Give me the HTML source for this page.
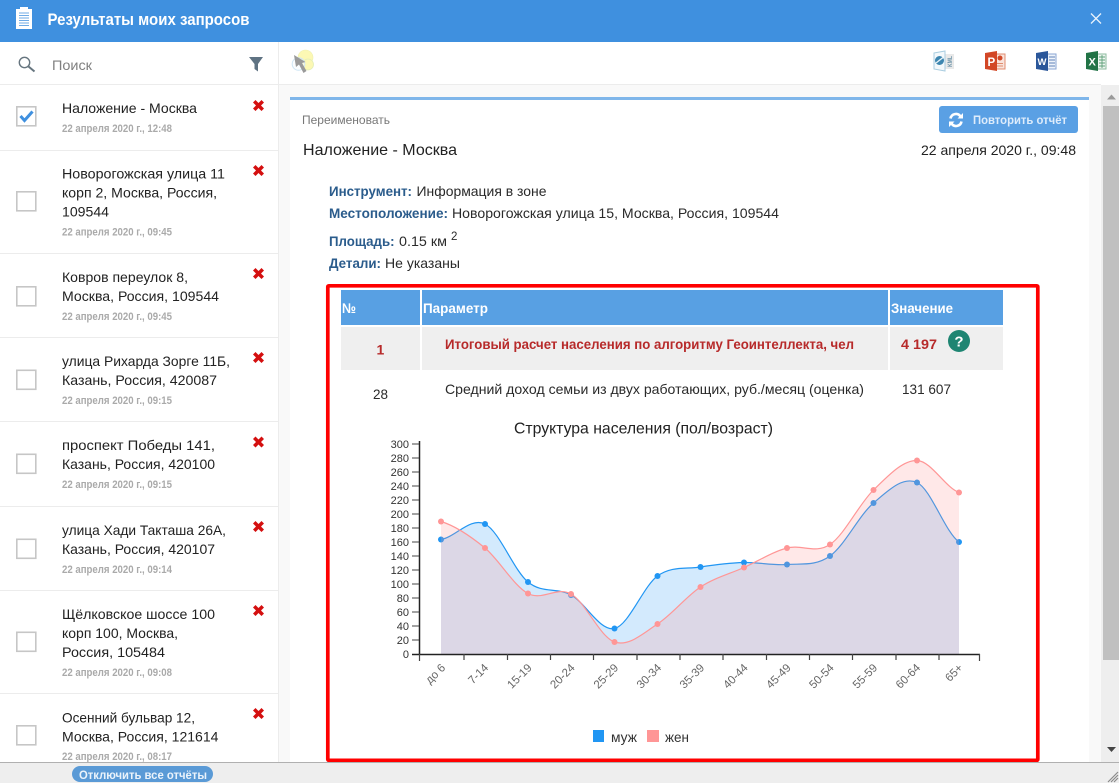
<!DOCTYPE html>
<html lang="ru">
<head>
<meta charset="utf-8">
<title>Результаты моих запросов</title>
<style>
html,body{margin:0;padding:0;width:1119px;height:783px;overflow:hidden;background:#fff}
svg{display:block;font-family:"Liberation Sans","Noto Sans CJK SC",sans-serif}
.n{font-size:14px;fill:#222}
.d{font-size:11px;fill:#aaa;font-weight:bold}
.m{font-size:14px;fill:#2b5c8c;font-weight:bold}
.v{font-size:14px;fill:#2a2a2a}
.h{font-size:14px;fill:#fff;font-weight:bold}
.r{font-size:14px;fill:#b72a2a;font-weight:bold}
.y{font-size:11px;fill:#333;text-anchor:end}
.x{font-size:11.5px;fill:#666;text-anchor:end}
.ic{filter:blur(.35px)}
</style>
</head>
<body>
<svg width="1119" height="783" viewBox="0 0 1119 783" xmlns="http://www.w3.org/2000/svg">
<defs>
<path id="del" d="M-5.5,-3 L-3,-5.5 L0,-2.500 L3,-5.500 L5.500,-3 L2.500,0 L5.500,3 L3,5.500 L0,2.500 L-3,5.500 L-5.500,3 L-2.500,0 Z" fill="#d40f0f"/>
</defs>

<!-- backgrounds -->
<rect width="1119" height="783" fill="#fff"/>
<rect x="279" y="85" width="840" height="678" fill="#f9f9f9"/>
<rect x="290" y="97" width="799" height="666" fill="#fff"/>
<rect x="290" y="97" width="799" height="3" fill="#7fb6ea"/>
<rect x="1101" y="85" width="18" height="678" fill="#eee"/>
<rect x="1103" y="106" width="16" height="554" fill="#c0c0c0"/>
<path d="M1107,99.500 L1116,99.500 L1111.500,94.500 Z" fill="#999"/>
<path d="M1107,747 L1116,747 L1111.500,752 Z" fill="#444"/>
<rect x="278" y="42" width="1" height="721" fill="#ececec"/>
<rect x="0" y="84" width="1101" height="1" fill="#ececec"/>

<!-- header -->
<rect width="1119" height="42" fill="#3f90df"/>
<path d="M16,9 H20 V7 H28 V9 H32 V29 H16 Z" fill="#fff"/>
<path d="M19,13 H29 M19,15.500 H29 M19,18 H29 M19,20.500 H29 M19,23 H29 M19,25.500 H29" stroke="#6fabe6" stroke-width="1"/>
<text x="47.500" y="25" font-size="17" font-weight="bold" fill="#fff" textLength="202" lengthAdjust="spacingAndGlyphs">Результаты моих запросов</text>
<path d="M1091,13.500 L1101,23.500 M1101,13.500 L1091,23.500" stroke="#e8f2fc" stroke-width="1.300" fill="none"/>

<!-- search row -->
<circle cx="24.500" cy="62.500" r="5.200" fill="none" stroke="#66757f" stroke-width="1.400"/>
<path d="M28.500,66.500 L34.500,71.500" stroke="#66757f" stroke-width="2"/>
<text x="52" y="70" font-size="14" fill="#808080" textLength="40" lengthAdjust="spacingAndGlyphs">Поиск</text>
<path d="M249,57 H263 L258,64 V71.500 L254.500,69 V64 Z" fill="#5f7383"/>

<!-- list separators -->
<g fill="#ececec">
<rect x="0" y="150" width="278" height="1"/>
<rect x="0" y="253" width="278" height="1"/>
<rect x="0" y="337" width="278" height="1"/>
<rect x="0" y="421" width="278" height="1"/>
<rect x="0" y="506" width="278" height="1"/>
<rect x="0" y="590" width="278" height="1"/>
<rect x="0" y="693" width="278" height="1"/>
</g>

<!-- checkboxes -->
<g fill="#fff" stroke="#c6c6c6" stroke-width="1.600">
<rect x="16.800" y="106.800" width="19" height="19"/>
<rect x="16.800" y="191.800" width="19" height="19"/>
<rect x="16.800" y="286.800" width="19" height="19"/>
<rect x="16.800" y="370.300" width="19" height="19"/>
<rect x="16.800" y="454.300" width="19" height="19"/>
<rect x="16.800" y="539.300" width="19" height="19"/>
<rect x="16.800" y="632.300" width="19" height="19"/>
<rect x="16.800" y="725.800" width="19" height="19"/>
</g>
<path d="M20.500,116 L24.500,120.500 L32.500,111.500" fill="none" stroke="#3f90df" stroke-width="3"/>

<!-- delete -->
<use href="#del" x="258.500" y="105.500"/>
<use href="#del" x="258.500" y="170.500"/>
<use href="#del" x="258.500" y="273.500"/>
<use href="#del" x="258.500" y="357.500"/>
<use href="#del" x="258.500" y="442"/>
<use href="#del" x="258.500" y="526.500"/>
<use href="#del" x="258.500" y="610.500"/>
<use href="#del" x="258.500" y="713.500"/>

<!-- list text -->
<text class="n" x="62" y="113" textLength="135" lengthAdjust="spacingAndGlyphs">Наложение - Москва</text>
<text class="d" x="62" y="132" textLength="110" lengthAdjust="spacingAndGlyphs">22 апреля 2020 г., 12:48</text>

<text class="n" x="62" y="178.500" textLength="163" lengthAdjust="spacingAndGlyphs">Новорогожская улица 11</text>
<text class="n" x="62" y="197.500" textLength="155" lengthAdjust="spacingAndGlyphs">корп 2, Москва, Россия,</text>
<text class="n" x="62" y="216.500" textLength="47" lengthAdjust="spacingAndGlyphs">109544</text>
<text class="d" x="62" y="235.500" textLength="110" lengthAdjust="spacingAndGlyphs">22 апреля 2020 г., 09:45</text>

<text class="n" x="62" y="282" textLength="126" lengthAdjust="spacingAndGlyphs">Ковров переулок 8,</text>
<text class="n" x="62" y="301" textLength="157" lengthAdjust="spacingAndGlyphs">Москва, Россия, 109544</text>
<text class="d" x="62" y="320" textLength="110" lengthAdjust="spacingAndGlyphs">22 апреля 2020 г., 09:45</text>

<text class="n" x="62" y="366" textLength="168" lengthAdjust="spacingAndGlyphs">улица Рихарда Зорге 11Б,</text>
<text class="n" x="62" y="385" textLength="155" lengthAdjust="spacingAndGlyphs">Казань, Россия, 420087</text>
<text class="d" x="62" y="404" textLength="110" lengthAdjust="spacingAndGlyphs">22 апреля 2020 г., 09:15</text>

<text class="n" x="62" y="450" textLength="153" lengthAdjust="spacingAndGlyphs">проспект Победы 141,</text>
<text class="n" x="62" y="469" textLength="153" lengthAdjust="spacingAndGlyphs">Казань, Россия, 420100</text>
<text class="d" x="62" y="488" textLength="110" lengthAdjust="spacingAndGlyphs">22 апреля 2020 г., 09:15</text>

<text class="n" x="62" y="535" textLength="164" lengthAdjust="spacingAndGlyphs">улица Хади Такташа 26А,</text>
<text class="n" x="62" y="554" textLength="153" lengthAdjust="spacingAndGlyphs">Казань, Россия, 420107</text>
<text class="d" x="62" y="573" textLength="110" lengthAdjust="spacingAndGlyphs">22 апреля 2020 г., 09:14</text>

<text class="n" x="62" y="619" textLength="153" lengthAdjust="spacingAndGlyphs">Щёлковское шоссе 100</text>
<text class="n" x="62" y="638" textLength="116" lengthAdjust="spacingAndGlyphs">корп 100, Москва,</text>
<text class="n" x="62" y="657" textLength="103" lengthAdjust="spacingAndGlyphs">Россия, 105484</text>
<text class="d" x="62" y="676" textLength="110" lengthAdjust="spacingAndGlyphs">22 апреля 2020 г., 09:08</text>

<text class="n" x="62" y="722.500" textLength="133" lengthAdjust="spacingAndGlyphs">Осенний бульвар 12,</text>
<text class="n" x="62" y="741.500" textLength="156.500" lengthAdjust="spacingAndGlyphs">Москва, Россия, 121614</text>
<text class="d" x="62" y="760" textLength="110" lengthAdjust="spacingAndGlyphs">22 апреля 2020 г., 08:17</text>

<!-- toolbar icons -->
<g class="ic">
<circle cx="305.500" cy="57.500" r="7.500" fill="#fcf8b4" stroke="#eef0b0" stroke-width=".6"/>
<circle cx="308" cy="64.500" r="5.500" fill="#fcf8b4" stroke="#e3eeb8" stroke-width=".8"/>
<circle cx="298.500" cy="64" r="6.300" fill="#f6fbff" fill-opacity=".55" stroke="#cfe6f5" stroke-width="1"/>
<path d="M294,55 L296,67 L299,64.500 L303.500,73 L306.500,71 L302,63 L305.500,62 Z" fill="#9a9a9a"/>
</g>

<!-- KML -->
<g class="ic">
<rect x="945" y="54" width="9" height="15" fill="#e9e9e9"/>
<path d="M934,53 L945,51 V71 L934,69 Z" fill="#f3f8fb" stroke="#a9cde0" stroke-width="1"/>
<circle cx="939.500" cy="60.500" r="4.500" fill="#3d86b0"/>
<path d="M936,63 L943,57.500" stroke="#e8f3f8" stroke-width="1.400"/>
<text x="0" y="0" transform="translate(952,67) rotate(-90)" font-size="6.500" font-weight="bold" fill="#6c93a8" textLength="11" lengthAdjust="spacingAndGlyphs">KML</text>
</g>

<!-- PPT -->
<g class="ic">
<rect x="994" y="54" width="11" height="15" fill="#f9e4dc" stroke="#e08d70" stroke-width="1"/>
<path d="M985,53 L997,51 V71 L985,69 Z" fill="#d24726"/>
<text x="987.500" y="66" font-size="11.500" font-weight="bold" fill="#fff">P</text>
<circle cx="1000" cy="58" r="2.500" fill="#d24726"/>
<path d="M997,63.500 H1003 M997,66 H1003" stroke="#e08d70" stroke-width="1"/>
</g>

<!-- Word -->
<g class="ic">
<rect x="1045" y="54" width="11" height="15" fill="#eef3fa" stroke="#8aa6d3" stroke-width="1"/>
<path d="M1036,53 L1048,51 V71 L1036,69 Z" fill="#2b579a"/>
<text x="1037.500" y="65" font-size="9.500" font-weight="bold" fill="#fff">W</text>
<path d="M1049,57 H1055 M1049,60 H1055 M1049,63 H1055 M1049,66 H1055" stroke="#5f80b8" stroke-width="1"/>
</g>

<!-- Excel -->
<g class="ic">
<rect x="1095" y="54" width="11" height="15" fill="#eef6f0" stroke="#8dbb9f" stroke-width="1"/>
<path d="M1086,53 L1098,51 V71 L1086,69 Z" fill="#217346"/>
<text x="1088.500" y="65.500" font-size="11" font-weight="bold" fill="#fff">X</text>
<path d="M1099,57 H1105 M1099,60 H1105 M1099,63 H1105 M1099,66 H1105 M1102,55 V68" stroke="#5fa07a" stroke-width=".9"/>
</g>

<!-- card head -->
<text x="302" y="124" font-size="12" fill="#777" textLength="88" lengthAdjust="spacingAndGlyphs">Переименовать</text>
<rect x="939" y="106" width="139" height="27" rx="3" fill="#5aa0e4"/>
<g fill="none" stroke="#fff" stroke-width="2.600">
<path d="M950.500,118.500 A5.500,5.500 0 0 1 960.500,116.500"/>
<path d="M961.500,121.500 A5.500,5.500 0 0 1 951.500,123.500"/>
</g>
<path d="M963,113 V118.500 H957.500 Z M949,127 V121.500 H954.500 Z" fill="#fff"/>
<text x="973" y="124" font-size="12" font-weight="bold" fill="#deecfb" textLength="94" lengthAdjust="spacingAndGlyphs">Повторить отчёт</text>
<text x="303" y="155" font-size="16" fill="#222" textLength="154" lengthAdjust="spacingAndGlyphs">Наложение - Москва</text>
<text x="921" y="155" font-size="14" fill="#222" textLength="155" lengthAdjust="spacingAndGlyphs">22 апреля 2020 г., 09:48</text>

<!-- meta -->
<text class="m" x="329" y="196" textLength="83" lengthAdjust="spacingAndGlyphs">Инструмент:</text>
<text class="v" x="416.500" y="196" textLength="130" lengthAdjust="spacingAndGlyphs">Информация в зоне</text>
<text class="m" x="329" y="218" textLength="119" lengthAdjust="spacingAndGlyphs">Местоположение:</text>
<text class="v" x="452" y="218" textLength="327" lengthAdjust="spacingAndGlyphs">Новорогожская улица 15, Москва, Россия, 109544</text>
<text class="m" x="329" y="246" textLength="65.500" lengthAdjust="spacingAndGlyphs">Площадь:</text>
<text class="v" x="399" y="246" textLength="48" lengthAdjust="spacingAndGlyphs">0.15 км</text>
<text x="451" y="240" font-size="11.500" fill="#2a2a2a">2</text>
<text class="m" x="329" y="268" textLength="52" lengthAdjust="spacingAndGlyphs">Детали:</text>
<text class="v" x="385" y="268" textLength="75" lengthAdjust="spacingAndGlyphs">Не указаны</text>

<!-- table -->
<rect x="341" y="290" width="79" height="35" fill="#58a0e3"/>
<rect x="422" y="290" width="466" height="35" fill="#58a0e3"/>
<rect x="890" y="290" width="113" height="35" fill="#58a0e3"/>
<rect x="341" y="327" width="79" height="43" fill="#efefef"/>
<rect x="422" y="327" width="466" height="43" fill="#efefef"/>
<rect x="890" y="327" width="113" height="43" fill="#efefef"/>
<text class="h" x="342" y="313" textLength="14" lengthAdjust="spacingAndGlyphs">№</text>
<text class="h" x="423" y="313" textLength="65" lengthAdjust="spacingAndGlyphs">Параметр</text>
<text class="h" x="891" y="313" textLength="62" lengthAdjust="spacingAndGlyphs">Значение</text>
<text class="r" x="376.500" y="354.500">1</text>
<text class="r" x="445" y="349" textLength="409" lengthAdjust="spacingAndGlyphs">Итоговый расчет населения по алгоритму Геоинтеллекта, чел</text>
<text class="r" x="901" y="349" textLength="36" lengthAdjust="spacingAndGlyphs">4 197</text>
<circle cx="959" cy="341" r="11" fill="#1e8572"/>
<text x="959" y="346.500" font-size="15" font-weight="bold" fill="#fff" text-anchor="middle">?</text>
<text class="v" x="373" y="399" textLength="15" lengthAdjust="spacingAndGlyphs">28</text>
<text class="v" x="445" y="394" textLength="419" lengthAdjust="spacingAndGlyphs">Средний доход семьи из двух работающих, руб./месяц (оценка)</text>
<text class="v" x="902" y="394" textLength="49" lengthAdjust="spacingAndGlyphs">131 607</text>

<!-- chart -->
<text x="514" y="433.500" font-size="16" fill="#222" textLength="259" lengthAdjust="spacingAndGlyphs">Структура населения (пол/возраст)</text>

<!-- blue series -->
<path d="M441,539.500 C455.700,536.900 470.300,516.900 485,524 C499.300,531.100 513.700,570.200 528,582 C542.300,593.800 556.700,587.200 571,595 C585.500,602.800 600,631.700 614.500,628.500 C628.800,625.300 643.200,586.300 657.500,576 C671.800,565.700 686.200,569.300 700.500,567 C715,564.700 729.500,562.900 744,562.500 C758.300,562.100 772.700,565.600 787,564.500 C801.300,563.400 815.700,566.300 830,556 C844.500,545.800 859,515.300 873.500,503 C888,490.800 902.500,476 917,482.500 C931,489 945,532 959,542 V654 H441 Z" fill="#2196f3" fill-opacity=".2"/>
<path d="M441,539.500 C455.700,536.900 470.300,516.900 485,524 C499.300,531.100 513.700,570.200 528,582 C542.300,593.800 556.700,587.200 571,595 C585.500,602.800 600,631.700 614.500,628.500 C628.800,625.300 643.200,586.300 657.500,576 C671.800,565.700 686.200,569.300 700.500,567 C715,564.700 729.500,562.900 744,562.500 C758.300,562.100 772.700,565.600 787,564.500 C801.300,563.400 815.700,566.300 830,556 C844.500,545.800 859,515.300 873.500,503 C888,490.800 902.500,476 917,482.500 C931,489 945,532 959,542" fill="none" stroke="#2196f3" stroke-width="1.200"/>
<g fill="#2196f3">
<circle cx="441" cy="539.500" r="3"/><circle cx="485" cy="524" r="3"/><circle cx="528" cy="582" r="3"/><circle cx="571" cy="595" r="3"/><circle cx="614.500" cy="628.500" r="3"/><circle cx="657.500" cy="576" r="3"/><circle cx="700.500" cy="567" r="3"/><circle cx="744" cy="562.500" r="3"/><circle cx="787" cy="564.500" r="3"/><circle cx="830" cy="556" r="3"/><circle cx="873.500" cy="503" r="3"/><circle cx="917" cy="482.500" r="3"/><circle cx="959" cy="542" r="3"/>
</g>

<!-- pink series -->
<path d="M441,521.500 C455.700,525.900 470.300,536 485,548 C499.300,560 513.700,585.800 528,593.500 C542.300,601.200 556.700,585.900 571,594 C585.500,602.100 600,637 614.500,642 C628.800,647 643.200,633.200 657.500,624 C671.800,614.800 686.200,596.400 700.500,587 C715,577.600 729.500,574 744,567.500 C758.300,561 772.700,551.800 787,548 C801.300,544.200 815.700,554.200 830,544.500 C844.500,534.800 859,504 873.500,490 C888,476 902.500,460.100 917,460.500 C931,460.900 945,487.200 959,492.500 V654 H441 Z" fill="#ff9696" fill-opacity=".22"/>
<path d="M441,521.500 C455.700,525.900 470.300,536 485,548 C499.300,560 513.700,585.800 528,593.500 C542.300,601.200 556.700,585.900 571,594 C585.500,602.100 600,637 614.500,642 C628.800,647 643.200,633.200 657.500,624 C671.800,614.800 686.200,596.400 700.500,587 C715,577.600 729.500,574 744,567.500 C758.300,561 772.700,551.800 787,548 C801.300,544.200 815.700,554.200 830,544.500 C844.500,534.800 859,504 873.500,490 C888,476 902.500,460.100 917,460.500 C931,460.900 945,487.200 959,492.500" fill="none" stroke="#ff9696" stroke-width="1.200"/>
<g fill="#ff9696">
<circle cx="441" cy="521.500" r="3"/><circle cx="485" cy="548" r="3"/><circle cx="528" cy="593.500" r="3"/><circle cx="571" cy="594" r="3"/><circle cx="614.500" cy="642" r="3"/><circle cx="657.500" cy="624" r="3"/><circle cx="700.500" cy="587" r="3"/><circle cx="744" cy="567.500" r="3"/><circle cx="787" cy="548" r="3"/><circle cx="830" cy="544.500" r="3"/><circle cx="873.500" cy="490" r="3"/><circle cx="917" cy="460.500" r="3"/><circle cx="959" cy="492.500" r="3"/>
</g>

<!-- axes -->
<path d="M419.500,441 V654.500 M412,654.500 H980" stroke="#222" stroke-width="1.500" fill="none"/>
<path d="M412,444 H419 M412,458 H419 M412,472 H419 M412,486 H419 M412,500 H419 M412,514 H419 M412,528 H419 M412,542 H419 M412,556 H419 M412,570 H419 M412,584 H419 M412,598 H419 M412,612 H419 M412,626 H419 M412,640 H419" stroke="#444" stroke-width="1" fill="none"/>
<path d="M419.500,654 V661 M464,654 V660 M507.500,654 V660 M550.500,654 V660 M593.500,654 V660 M637,654 V660 M680,654 V660 M723,654 V660 M766.500,654 V660 M809.500,654 V660 M852.500,654 V660 M896,654 V660 M939,654 V660 M979.500,654 V661" stroke="#444" stroke-width="1.200" fill="none"/>
<g>
<text class="y" x="409" y="448">300</text><text class="y" x="409" y="462">280</text><text class="y" x="409" y="476">260</text><text class="y" x="409" y="490">240</text><text class="y" x="409" y="504">220</text><text class="y" x="409" y="518">200</text><text class="y" x="409" y="532">180</text><text class="y" x="409" y="546">160</text><text class="y" x="409" y="560">140</text><text class="y" x="409" y="574">120</text><text class="y" x="409" y="588">100</text><text class="y" x="409" y="602">80</text><text class="y" x="409" y="616">60</text><text class="y" x="409" y="630">40</text><text class="y" x="409" y="644">20</text><text class="y" x="409" y="658">0</text>
</g>
<g>
<text class="x" transform="translate(446,668.500) rotate(-45)">до 6</text>
<text class="x" transform="translate(489,668.500) rotate(-45)">7-14</text>
<text class="x" transform="translate(532.500,668.500) rotate(-45)">15-19</text>
<text class="x" transform="translate(575.500,668.500) rotate(-45)">20-24</text>
<text class="x" transform="translate(619,668.500) rotate(-45)">25-29</text>
<text class="x" transform="translate(662,668.500) rotate(-45)">30-34</text>
<text class="x" transform="translate(705,668.500) rotate(-45)">35-39</text>
<text class="x" transform="translate(748.500,668.500) rotate(-45)">40-44</text>
<text class="x" transform="translate(791.500,668.500) rotate(-45)">45-49</text>
<text class="x" transform="translate(834.500,668.500) rotate(-45)">50-54</text>
<text class="x" transform="translate(878,668.500) rotate(-45)">55-59</text>
<text class="x" transform="translate(921,668.500) rotate(-45)">60-64</text>
<text class="x" transform="translate(963.500,668.500) rotate(-45)">65+</text>
</g>

<!-- legend -->
<rect x="593" y="730" width="11" height="12" fill="#2196f3"/>
<rect x="647" y="730" width="12" height="12" fill="#ff9696"/>
<text x="611" y="742" font-size="14" fill="#333" textLength="26" lengthAdjust="spacingAndGlyphs">муж</text>
<text x="665" y="742" font-size="14" fill="#333" textLength="24" lengthAdjust="spacingAndGlyphs">жен</text>

<!-- highlight frame -->
<rect x="327.800" y="285.800" width="710" height="474.500" rx="1" fill="none" stroke="#f00" stroke-width="3.700"/>

<!-- bottom bar -->
<rect x="0" y="762" width="1119" height="21" fill="#eee"/>
<rect x="0" y="762" width="1119" height="1" fill="#b0b0b0"/>
<rect x="72" y="766" width="141" height="16" rx="8" fill="#5a9ad6"/>
<text x="79" y="779" font-size="12" font-weight="bold" fill="#eaf3fb" textLength="128" lengthAdjust="spacingAndGlyphs">Отключить все отчёты</text>
<path d="M1108,782 L1118,772 M1111,782 L1118,775 M1114,782 L1118,778" stroke="#8a8a8a" stroke-width="1.200"/>
</svg>
</body>
</html>
